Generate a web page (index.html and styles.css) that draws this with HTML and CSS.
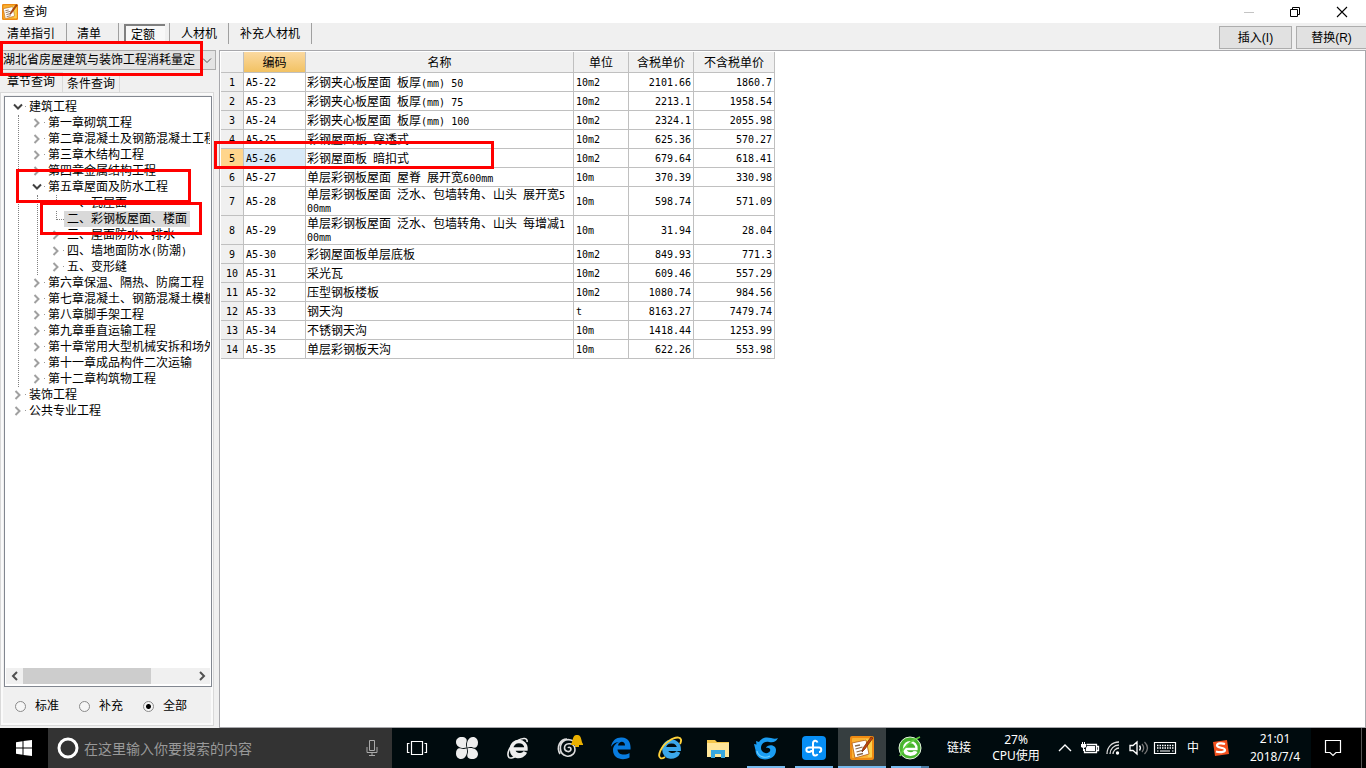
FILE: index.html
```html
<!DOCTYPE html>
<html lang="zh-CN">
<head>
<meta charset="utf-8">
<title>查询</title>
<link rel="stylesheet" href="styles.css">
</head>
<body>
<svg class="defs" aria-hidden="true">
  <symbol id="note" viewBox="0 0 24 24">
    <rect x="0" y="0" width="24" height="24" rx="2" fill="#ee8a12"/>
    <rect x="2" y="2" width="20" height="20" rx="1" fill="#f9b233"/>
    <path d="M14 3h8v18h-4z" fill="#fbd04c"/>
    <path d="M2 7l14-3 3 14-14 4z" fill="#fff" stroke="#b35c10" stroke-width=".8"/>
    <path d="M5 10l5-1M5.500 13l7-2M6.500 16l7-2M7 19l6-1.500" stroke="#8a6a4a" stroke-width="1.300"/>
    <path d="M21 1l2 1-8 11-3 3 1-4z" fill="#c0450c" stroke="#6b2405" stroke-width=".7"/>
  </symbol>
  <symbol id="right" viewBox="0 0 10 16"><path d="M2.500 4l4 4-4 4" fill="none" stroke="#a0a0a0" stroke-width="2"/></symbol>
  <symbol id="down" viewBox="0 0 10 16"><path d="M1 5.500l4 4 4-4" fill="none" stroke="#404040" stroke-width="2"/></symbol>
</svg>
<div class="window">
  <header class="titlebar">
    <svg class="app-icon"><use href="#note"/></svg>
    <h1>查询</h1>
    <div class="window-controls">
      <button aria-label="最小化"><svg viewBox="0 0 12 12"><path d="M1 6.500h10" stroke="#c4c4c4"/></svg></button>
      <button aria-label="还原"><svg viewBox="0 0 12 12"><path d="M1.500 3.500h7v7h-7zM3.500 3V1.500h7v7H9" fill="none" stroke="#000"/></svg></button>
      <button aria-label="关闭"><svg viewBox="0 0 12 12"><path d="M1 1l10 10M11 1L1 11" stroke="#000" stroke-width="1.100"/></svg></button>
    </div>
  </header>
  <nav class="toolbar">
    <div class="modes">
      <button class="mode">清单指引</button>
      <button class="mode">清单</button>
      <button class="mode pressed"><span>定额</span></button>
      <button class="mode">人材机</button>
      <button class="mode">补充人材机</button>
    </div>
    <div class="actions"><button>插入(I)</button><button>替换(R)</button></div>
  </nav>
  <main class="content">
    <aside class="side">
      <div class="library">
        <select aria-label="定额库"><option>湖北省房屋建筑与装饰工程消耗量定</option></select>
        <svg viewBox="0 0 10 6"><path d="M1 .5l4 4 4-4" fill="none" stroke="#555"/></svg>
      </div>
      <div class="tabs"><button class="tab active">章节查询</button><button class="tab">条件查询</button></div>
      <section class="panel">
        <div class="tree">
          <ul class="root">
            <li><div class="row"><svg><use href="#down"/></svg><span>建筑工程</span></div>
              <ul>
                <li><div class="row"><svg><use href="#right"/></svg><span>第一章砌筑工程</span></div></li>
                <li><div class="row"><svg><use href="#right"/></svg><span>第二章混凝土及钢筋混凝土工程</span></div></li>
                <li><div class="row"><svg><use href="#right"/></svg><span>第三章木结构工程</span></div></li>
                <li><div class="row"><svg><use href="#right"/></svg><span>第四章金属结构工程</span></div></li>
                <li><div class="row"><svg><use href="#down"/></svg><span>第五章屋面及防水工程</span></div>
                  <ul>
                    <li><div class="row leaf"><i></i><span>一、瓦屋面</span></div></li>
                    <li><div class="row leaf"><i></i><span class="selected">二、彩钢板屋面、楼面</span></div></li>
                    <li><div class="row"><svg><use href="#right"/></svg><span>三、屋面防水、排水</span></div></li>
                    <li><div class="row"><svg><use href="#right"/></svg><span>四、墙地面防水<b>(</b>防潮<b>)</b></span></div></li>
                    <li><div class="row"><svg><use href="#right"/></svg><span>五、变形缝</span></div></li>
                  </ul>
                </li>
                <li><div class="row"><svg><use href="#right"/></svg><span>第六章保温、隔热、防腐工程</span></div></li>
                <li><div class="row"><svg><use href="#right"/></svg><span>第七章混凝土、钢筋混凝土模板</span></div></li>
                <li><div class="row"><svg><use href="#right"/></svg><span>第八章脚手架工程</span></div></li>
                <li><div class="row"><svg><use href="#right"/></svg><span>第九章垂直运输工程</span></div></li>
                <li><div class="row"><svg><use href="#right"/></svg><span>第十章常用大型机械安拆和场外</span></div></li>
                <li><div class="row"><svg><use href="#right"/></svg><span>第十一章成品构件二次运输</span></div></li>
                <li><div class="row"><svg><use href="#right"/></svg><span>第十二章构筑物工程</span></div></li>
              </ul>
            </li>
            <li><div class="row"><svg><use href="#right"/></svg><span>装饰工程</span></div></li>
            <li><div class="row"><svg><use href="#right"/></svg><span>公共专业工程</span></div></li>
          </ul>
          <div class="scrollbar">
            <button aria-label="向左"><svg viewBox="0 0 8 10"><path d="M6 1L2 5l4 4" fill="none" stroke="#505050" stroke-width="2"/></svg></button>
            <div class="track"><div class="thumb"></div></div>
            <button aria-label="向右"><svg viewBox="0 0 8 10"><path d="M2 1l4 4-4 4" fill="none" stroke="#505050" stroke-width="2"/></svg></button>
          </div>
        </div>
        <div class="filters">
          <label><input type="radio" name="scope">标准</label>
          <label><input type="radio" name="scope">补充</label>
          <label><input type="radio" name="scope" checked>全部</label>
        </div>
      </section>
    </aside>
    <section class="grid">
      <table>
        <colgroup><col class="c-no"><col class="c-code"><col class="c-name"><col class="c-unit"><col class="c-tax"><col class="c-net"></colgroup>
        <thead><tr><th></th><th class="sorted">编码</th><th>名称</th><th>单位</th><th>含税单价</th><th>不含税单价</th></tr></thead>
        <tbody>
          <tr><th>1</th><td>A5-22</td><td class="name">彩钢夹心板屋面<b> </b>板厚<b>(mm) 50</b></td><td>10m2</td><td class="num">2101.66</td><td class="num">1860.7</td></tr>
          <tr><th>2</th><td>A5-23</td><td class="name">彩钢夹心板屋面<b> </b>板厚<b>(mm) 75</b></td><td>10m2</td><td class="num">2213.1</td><td class="num">1958.54</td></tr>
          <tr><th>3</th><td>A5-24</td><td class="name">彩钢夹心板屋面<b> </b>板厚<b>(mm) 100</b></td><td>10m2</td><td class="num">2324.1</td><td class="num">2055.98</td></tr>
          <tr><th>4</th><td>A5-25</td><td class="name">彩钢屋面板<b> </b>穿透式</td><td>10m2</td><td class="num">625.36</td><td class="num">570.27</td></tr>
          <tr class="current"><th>5</th><td>A5-26</td><td class="name">彩钢屋面板<b> </b>暗扣式</td><td>10m2</td><td class="num">679.64</td><td class="num">618.41</td></tr>
          <tr><th>6</th><td>A5-27</td><td class="name">单层彩钢板屋面<b> </b>屋脊<b> </b>展开宽<b>600mm</b></td><td>10m</td><td class="num">370.39</td><td class="num">330.98</td></tr>
          <tr class="tall"><th>7</th><td>A5-28</td><td class="name">单层彩钢板屋面<b> </b>泛水、包墙转角、山头<b> </b>展开宽<b>5<br>00mm</b></td><td>10m</td><td class="num">598.74</td><td class="num">571.09</td></tr>
          <tr class="tall"><th>8</th><td>A5-29</td><td class="name">单层彩钢板屋面<b> </b>泛水、包墙转角、山头<b> </b>每增减<b>1<br>00mm</b></td><td>10m</td><td class="num">31.94</td><td class="num">28.04</td></tr>
          <tr><th>9</th><td>A5-30</td><td class="name">彩钢屋面板单层底板</td><td>10m2</td><td class="num">849.93</td><td class="num">771.3</td></tr>
          <tr><th>10</th><td>A5-31</td><td class="name">采光瓦</td><td>10m2</td><td class="num">609.46</td><td class="num">557.29</td></tr>
          <tr><th>11</th><td>A5-32</td><td class="name">压型钢板楼板</td><td>10m2</td><td class="num">1080.74</td><td class="num">984.56</td></tr>
          <tr><th>12</th><td>A5-33</td><td class="name">钢天沟</td><td>t</td><td class="num">8163.27</td><td class="num">7479.74</td></tr>
          <tr><th>13</th><td>A5-34</td><td class="name">不锈钢天沟</td><td>10m</td><td class="num">1418.44</td><td class="num">1253.99</td></tr>
          <tr><th>14</th><td>A5-35</td><td class="name">单层彩钢板天沟</td><td>10m</td><td class="num">622.26</td><td class="num">553.98</td></tr>
        </tbody>
      </table>
    </section>
  </main>
  <div class="mark mark-library"></div>
  <div class="mark mark-chapter"></div>
  <div class="mark mark-section"></div>
  <div class="mark mark-item"></div>
  <footer class="taskbar">
    <button class="start" aria-label="开始"><svg viewBox="0 0 16 16"><path d="M0 2.300l6.500-1v6.200H0zM7.500 1.100L16 0v7.500H7.500zM0 8.500h6.500v6.200l-6.500-1zM7.500 8.500H16V16l-8.500-1.100z" fill="#fff"/></svg></button>
    <div class="search">
      <svg class="cortana" viewBox="0 0 22 22"><circle cx="11" cy="11" r="9" fill="none" stroke="#fff" stroke-width="3"/></svg>
      <input type="text" aria-label="搜索" placeholder="在这里输入你要搜索的内容">
      <svg class="mic" viewBox="0 0 12 18"><path d="M3.500 1.500h5v10h-5zM1 8v5.500h10V8M6 14v3M3 16.500h6" fill="none" stroke="#aaa"/></svg>
    </div>
    <div class="tasks">
      <button class="w50" aria-label="任务视图"><svg viewBox="0 0 24 24"><path d="M6.500 5.500h11v13h-11zM4.500 7.500h-2v9h2M19.500 7.500h2v9h-2" fill="none" stroke="#fff" stroke-width="1.200"/></svg></button>
      <button class="w50" aria-label="风车"><svg viewBox="0 0 24 24"><g fill="#eee"><path id="petal" d="M11.700 11.600C7 13 1 11 1 6c0-3 2.500-5 5.500-5 4 0 6 2 5 5-.7 2-.6 4 .2 5.600z"/><use href="#petal" transform="rotate(90 12 12)"/><use href="#petal" transform="rotate(180 12 12)"/><use href="#petal" transform="rotate(270 12 12)"/></g></svg></button>
      <button class="w52" aria-label="浏览器"><svg viewBox="0 0 24 24"><path d="M19 16c-2 4-11 4-11.500-3H20c.5-10-14.500-10-14.500 0 0 9 11 10 14 3" fill="none" stroke="#eee" stroke-width="3.400"/><path d="M21 6c1-4-4-5-10-1C4 9 0 18 3 21.500c1 1 4 .5 6-1" fill="none" stroke="#eee" stroke-width="1.600"/></svg></button>
      <button class="w52" aria-label="提醒"><svg class="wide" viewBox="0 0 30 28"><path d="M13 14c1-2 4 0 2.500 2.500-1.500 2-6 1-6-2.500 0-5 8-6 10-1 2 6-3 10-8 9-8-2-8-13-1-16 3-1 6 0 8 1M5 20c-4-7 0-15 7-15" fill="none" stroke="#ddd" stroke-width="1.600"/><path d="M16 10c2-2 1-8 5-9h2c4 1 3 7 5 9v1H16zM20 11h4v2h-4z" fill="#eab000"/></svg></button>
      <button class="w50" aria-label="Edge"><svg viewBox="0 0 24 24"><path d="M2 11C3 4 8 1 13 1.500c7 .5 9 6 8.500 12H8.500c.5 6 8 6 12 3.500v4.500C14 25 4 23 4 14c0-4 3-7 6-8-4 0-7 3-8 5zm7-1.500h7c0-5-6-5-7 0z" fill="#087ce0"/></svg></button>
      <button aria-label="Internet Explorer"><svg viewBox="0 0 24 24"><path d="M20 16c-2 4.500-12 4-12-3h13c0-10-15-10-15 0 0 10 12 10 14.500 3" fill="none" stroke="#3ba7eb" stroke-width="3.800"/><path d="M22 8c4-8-4-8-11-3C3 10-1 20 2.500 22c1 .8 3 0 4.500-1" fill="none" stroke="#ffd23b" stroke-width="1.900"/></svg></button>
      <button aria-label="文件资源管理器"><svg viewBox="0 0 24 24"><path d="M1 4h8l2 2h12v15H1z" fill="#f3c64b"/><path d="M1 7h22v14H1z" fill="#ffe69a"/><path d="M5 14h14v8h-4v-4H9v4H5z" fill="#38a7df"/></svg></button>
      <button class="running" aria-label="广联达"><svg viewBox="0 0 24 24"><path d="M24 2c-2 4-5 5-9 4-5-1-8 2-8 6 0 5 7 7 9 3 1-2-1-4-4-3 1-4 10-4 10 2 0 6-5 9.500-11 9.500-6 0-9.500-4.500-9.500-9.500L0 8l2.500.5L2 5l3 1c3-5 8-5 12-4 3 1 5 1 7 0z" fill="#1a9df2"/><path d="M3 15c1 5 7 8 13 5" fill="none" stroke="#6fd0ff" stroke-width="1.200"/></svg></button>
      <button class="running" aria-label="云助手"><svg viewBox="0 0 24 24"><rect width="24" height="24" rx="4" fill="#078ef4"/><path d="M15.500 6.500c-1-3-4.500-2-4.500 1V17c0 3 3.500 3.500 4.500 1M11 11.500h6c3 0 3 4.500 0 4.500M11 11.500H7c-3.500 0-3.500 4.500 0 4.500 1.500 0 2.500-1 2.500-2" fill="none" stroke="#fff" stroke-width="2"/></svg></button>
      <button class="running active" aria-label="查询"><svg><use href="#note"/></svg></button>
      <button class="running multi" aria-label="360浏览器"><svg viewBox="0 0 24 24"><circle cx="12" cy="12" r="11" fill="#49b52e" stroke="#e4f5dd"/><path d="M17 15.500c-2 3-9.500 2.500-9.500-2.500h11c.5-9-12.500-9-12.500-.5 0 8 10 7.500 12.500 3" fill="none" stroke="#fff" stroke-width="2.300"/><path d="M2 20C6 10 14 4 22 1" fill="none" stroke="#5fcf3e" stroke-width="1.800"/></svg></button>
    </div>
    <span class="links">链接</span>
    <div class="cpu">27%<br>CPU使用</div>
    <div class="tray">
      <svg class="t24" viewBox="0 0 24 20"><path d="M6 13l6-6 6 6" fill="none" stroke="#fff" stroke-width="1.400"/></svg>
      <svg class="t24" viewBox="0 0 24 20"><path d="M9.500 6.500h10v8h-12V11M19.500 8.500h2v4h-2" fill="none" stroke="#fff" stroke-width="1.300"/><path d="M10 8h8v5H9v-3zM4 6h5v3l-2 1v3H6v-3L4 9zM5 4h1v2H5zM7 4h1v2H7z" fill="#fff"/></svg>
      <svg class="t24" viewBox="0 0 24 20"><path d="M6 16C6 9 11 4 18 4M9 16c0-5 4-9 9-9M12 16c0-3 3-6 6-6" fill="none" stroke="#ddd" stroke-width="1.300"/><circle cx="16.500" cy="15" r="1.700" fill="#fff"/></svg>
      <svg class="t24" viewBox="0 0 24 20"><path d="M5 7.500h3L12 4v12l-4-3.500H5zM14.500 7.500c1.500 2 1.500 3 0 5" fill="none" stroke="#fff" stroke-width="1.300"/><path d="M17 6c2.500 3 2.500 5 0 8M19.500 4c4 4 4 8 0 12" fill="none" stroke="#777" stroke-width="1.300"/></svg>
      <svg class="t32" viewBox="0 0 32 20"><path d="M5.500 4.500h21v11h-21z" fill="none" stroke="#fff" stroke-width="1.200"/><path d="M8 7.500h17M8 10h17" stroke="#fff" stroke-width="1.400" stroke-dasharray="1.500 1"/><path d="M8 13h1.500M11 13h10M23 13h1.500" stroke="#fff" stroke-width="1.200"/></svg>
      <span class="ime">中</span>
      <svg class="t32" viewBox="0 0 32 20"><path d="M8 4l14-2 2 14-14 2z" fill="#f4511e"/><path d="M20 6c-3-1-8-1-8 1.500 0 3 8 1.500 8 4.500 0 2.500-6 2.500-9 1.500" fill="none" stroke="#fff" stroke-width="2.200"/></svg>
    </div>
    <div class="clock">21:01<br>2018/7/4</div>
    <button class="notice" aria-label="通知"><svg viewBox="0 0 18 18"><path d="M1.500 1.500h15v12H12L9 16.500l-3-3H1.500z" fill="none" stroke="#fff" stroke-width="1.200"/></svg></button>
    <div class="desktop-edge"></div>
  </footer>
</div>
</body>
</html>
```
FILE: styles.css
```css
* { box-sizing: border-box; }
body {
  margin: 0;
  background: #f0f0f0;
  color: #000;
  font: 12px/16px "Liberation Sans", "Noto Sans CJK SC", sans-serif;
}
button {
  margin: 0;
  padding: 0;
  border: 0;
  background: none;
  color: inherit;
  font: inherit;
}
svg { display: block; }
.defs { position: absolute; width: 0; height: 0; }
.window { position: relative; display: flex; flex-direction: column; height: 100vh; overflow: hidden; }

.titlebar { display: flex; align-items: center; flex: none; height: 23px; padding-left: 2px; background: #fff; }
.app-icon { width: 16px; height: 16px; }
h1 { flex: 1; margin: 0 0 0 5px; font-size: 12px; font-weight: 400; }
.window-controls { display: flex; height: 20px; }
.window-controls button { display: flex; align-items: center; justify-content: center; width: 46px; }
.window-controls button:last-child { width: 48px; }
.window-controls svg { width: 12px; height: 12px; }

.toolbar { display: flex; justify-content: space-between; flex: none; height: 27px; overflow: hidden; }
.modes { display: flex; height: 21px; }
.mode { padding: 0 11px; border-right: 1px solid #a0a0a0; white-space: nowrap; }
.mode:first-child { padding-left: 7px; }
.mode:nth-child(2) { padding: 0 17px 0 10px; }
.mode.pressed { padding: 1px 4px 0 5px; }
.mode.pressed span {
  display: block;
  height: 20px;
  padding: 1px 10px 0 5px;
  border: solid #808080;
  border-width: 2px 0 0 2px;
  background: #f8f8f8;
}
.actions { display: flex; gap: 4px; padding-top: 3px; }
.actions button { width: 73px; height: 23px; border: 1px solid #adadad; background: #e1e1e1; }
.actions button:last-child { width: 70px; border-right: 0; }

.content { display: flex; flex: 1; min-height: 0; }
.side { display: flex; flex-direction: column; flex: none; width: 219px; }
.library { position: relative; width: 216px; height: 20px; }
.library select {
  width: 100%;
  height: 20px;
  padding: 0 16px 0 3px;
  border: 1px solid #adadad;
  border-left: 0;
  border-radius: 0;
  appearance: none;
  background: #e4e4e4;
  color: #000;
  font: inherit;
}
.library svg { position: absolute; top: 8px; right: 4px; width: 10px; height: 6px; }
.tabs { display: flex; align-items: flex-end; height: 22px; }
.tab { height: 18px; padding: 0 4px; border: 1px solid #d9d9d9; border-width: 1px 1px 0 0; white-space: nowrap; }
.tab.active { height: 20px; padding: 0 7px 1px; }
.panel {
  display: flex;
  flex: 1;
  flex-direction: column;
  width: 214px;
  min-height: 0;
  margin-bottom: 2px;
  padding: 3px 1px 3px 3px;
  border: 1px solid #d9d9d9;
  box-shadow: inset 0 0 0 2px #fafafa;
}
.tree { display: flex; flex: 1; flex-direction: column; min-height: 0; border: 1px solid #828790; background: #fff; padding: 2px 1px 1px; }
.tree ul { margin: 0 0 0 12px; padding: 0 0 0 6px; border-left: 1px dotted #808080; list-style: none; }
.tree .root { flex: 1; min-height: 0; margin: 0; padding: 0; border: 0; overflow: hidden; }
.row { display: flex; height: 16px; padding-left: 7px; white-space: nowrap; }
.row svg { flex: none; width: 10px; height: 16px; }
.row svg + span::before { content: ""; display: inline-block; width: 1px; height: 1px; margin: 0 3px 4px 2px; background: #999; }
.leaf { padding-left: 12px; }
.leaf i { width: 8px; height: 9px; border: dotted #808080; border-width: 0 0 1px 1px; }
.leaf span { padding: 0 3px; }
.selected { background: #d9d9d9; }
.scrollbar { display: flex; flex: none; height: 16px; margin-bottom: 1px; background: #f0f0f0; }
.scrollbar button { display: flex; align-items: center; justify-content: center; width: 17px; }
.scrollbar svg { width: 8px; height: 10px; }
.track { flex: 1; }
.thumb { width: 75%; height: 100%; background: #cdcdcd; }
.filters { display: flex; flex: none; align-items: center; gap: 16px; height: 35px; padding: 3px 0 0 10px; }
.filters label { display: flex; align-items: center; width: 48px; white-space: nowrap; }
.filters input {
  width: 11px;
  height: 11px;
  margin: 0 9px 0 1px;
  border: 1px solid #8a8a8a;
  border-radius: 50%;
  appearance: none;
  background: #f6f6f6;
}
.filters input:checked { background: radial-gradient(circle, #000 2px, #f6f6f6 3px); }

.grid { flex: 1; min-width: 0; padding: 1px; border: 1px solid #a8a8ac; background: #fff; overflow: hidden; }
table { width: 554px; border-spacing: 0; table-layout: fixed; }
.c-no { width: 23px; }
.c-code { width: 62px; }
.c-name { width: 268px; }
.c-unit { width: 55px; }
.c-tax { width: 65px; }
.c-net { width: 81px; }
th, td { height: 19px; padding: 2px 2px 0; border: solid #c0c0c0; border-width: 0 1px 1px 0; line-height: 12px; white-space: nowrap; }
th { padding: 1px 0 0; background: #f0f0f0; font-weight: 400; text-align: center; }
thead th { height: 21px; }
td, tbody th, .name b, .row b { font-family: "DejaVu Sans Mono", "Noto Sans CJK SC", monospace; font-size: 10px; font-weight: 400; }
td.name { padding-left: 1px; font-size: 12px; }
.name b { white-space: pre; }
.num { text-align: right; }
.tall > * { height: 29px; }
.sorted { background: linear-gradient(#fbd9a0, #f2c263); }
.current th { background: #ffd58c; }
.current td:nth-child(2) { background: #d9eaf8; }

.mark { position: absolute; border: 3px solid #f00; pointer-events: none; }
.mark-library { top: 41px; left: 0; width: 203px; height: 35px; }
.mark-chapter { top: 169px; left: 16px; width: 175px; height: 34px; }
.mark-section { top: 202px; left: 40px; width: 162px; height: 33px; }
.mark-item { top: 141px; left: 214px; width: 280px; height: 28px; }

.taskbar { display: flex; flex: none; height: 40px; background: #000b0e; color: #fff; font-family: "Noto Sans", "Noto Sans CJK SC", sans-serif; }
.taskbar button { display: flex; align-items: center; justify-content: center; }
.start { width: 48px; background: #000; }
.start svg { width: 16px; height: 16px; }
.search { display: flex; align-items: center; width: 344px; padding: 0 14px 0 9px; background: #333; }
.cortana { width: 22px; height: 22px; }
.search input { flex: 1; min-width: 0; padding: 0 5px; border: 0; background: none; color: #fff; font: 14px/20px "Noto Sans CJK SC", sans-serif; }
.search input::placeholder { color: #999; opacity: 1; }
.mic { width: 12px; height: 18px; }
.tasks { display: flex; }
.tasks button { width: 48px; height: 40px; }
.tasks .w50 { width: 50px; }
.tasks .w52 { width: 52px; }
.tasks svg { width: 24px; height: 24px; }
.tasks svg.wide { width: 30px; height: 28px; }
.tasks .running { background: linear-gradient(#76b9ed, #76b9ed) bottom / 38px 2px no-repeat; }
.tasks .active { background: linear-gradient(#76b9ed, #76b9ed) bottom / 100% 2px no-repeat, #363e40; }
.tasks .multi { background: linear-gradient(90deg, #76b9ed 80%, #4a7ba4 80%) bottom / 38px 2px no-repeat; }
.links { margin-left: 13px; line-height: 40px; }
.cpu { width: 60px; margin-left: 15px; padding-top: 4px; text-align: center; white-space: nowrap; }
.tray { display: flex; align-items: center; margin-left: auto; }
.t24 { width: 24px; height: 20px; }
.t32 { width: 32px; height: 20px; }
.ime { width: 24px; text-align: center; }
.clock { width: 72px; margin-left: 2px; padding-top: 2px; line-height: 18px; text-align: center; }
.notice { width: 50px; padding-right: 6px; background: #000; }
.notice svg { width: 18px; height: 18px; }
.desktop-edge { width: 5px; border-left: 1px solid #555; background: #000; }
```
